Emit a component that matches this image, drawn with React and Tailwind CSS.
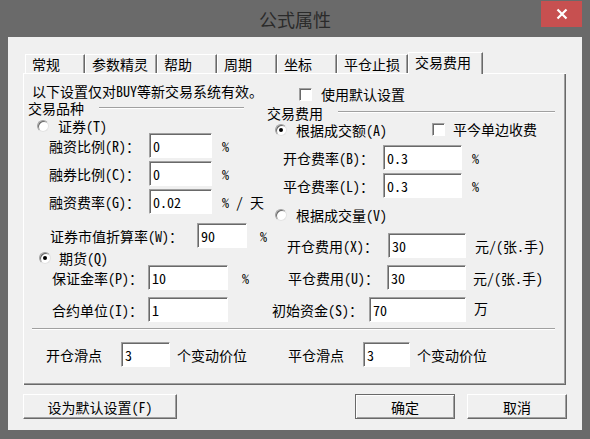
import React from 'react';

const Input = ({ w, v }) => (
  <div className={`${w} h-[25px] shrink-0 bg-white border border-t-[#a0a0a0] border-l-[#a0a0a0] border-r-white border-b-white shadow-[inset_1px_1px_0_#696969] flex items-center pl-[3px] leading-[16px]`}>
    {v}
  </div>
);

const Radio = ({ on }) => (
  <div className="w-[12px] h-[12px] shrink-0 rounded-full bg-white border border-t-[#a0a0a0] border-l-[#a0a0a0] border-r-[#e3e3e3] border-b-[#e3e3e3] shadow-[inset_1px_1px_0_#696969] flex items-center justify-center">
    {on && <div className="w-[4px] h-[4px] rounded-full bg-black" />}
  </div>
);

const Check = () => (
  <div className="w-[13px] h-[13px] shrink-0 bg-white border border-t-[#a0a0a0] border-l-[#a0a0a0] border-r-white border-b-white shadow-[inset_1px_1px_0_#696969]" />
);

const Etched = ({ w }) => (
  <div className={`${w} h-[2px] border-t border-t-[#a0a0a0] border-b border-b-white`} />
);

const Tab = ({ w, label, active }) =>
  active ? (
    <div className={`${w} h-[22px] -mb-px relative z-10 bg-[#f0f0f0] border-l border-t border-white border-r border-r-[#696969] shadow-[inset_-1px_0_0_#a0a0a0] pl-[6px] pb-[3px] flex items-center leading-[16px]`}>
      {label}
    </div>
  ) : (
    <div className={`${w} h-[19px] border-l border-t border-white border-r border-r-[#696969] shadow-[inset_-1px_0_0_#a0a0a0] pl-[6px] flex items-center leading-[16px]`}>
      {label}
    </div>
  );

const Btn = ({ w, label, def }) =>
  def ? (
    <div className={`${w} h-[25px] bg-[#f0f0f0] border border-[#696969] shadow-[inset_1px_1px_0_#ffffff,inset_-1px_-1px_0_#a0a0a0] flex items-center justify-center leading-[16px]`}>
      {label}
    </div>
  ) : (
    <div className={`${w} h-[25px] bg-[#f0f0f0] border border-t-white border-l-white border-r-[#696969] border-b-[#696969] shadow-[inset_-1px_-1px_0_#a0a0a0] flex items-center justify-center leading-[16px]`}>
      {label}
    </div>
  );

export default function App() {
  return (
    <div className="w-[590px] h-[439px] bg-[#6a6a6a] flex flex-col overflow-hidden font-[family-name:'Noto_Sans_Mono_CJK_SC','Noto_Sans_CJK_SC',sans-serif]">
      {/* title bar */}
      <div className="h-[37px] grid grid-cols-[1fr_auto_1fr] shrink-0">
        <div />
        <div className="self-center text-[18px] leading-[22px] text-[#2a2a2a] font-['Noto_Sans_CJK_SC',sans-serif]">公式属性</div>
        <div className="flex justify-end items-start">
          <div className="mr-[8px] mt-[1px] w-[41px] h-[26px] bg-[#c75050] flex items-center justify-center">
            <svg width="12" height="12" viewBox="0 0 12 12">
              <path d="M1.5 1.5 L10.5 10.5 M10.5 1.5 L1.5 10.5" stroke="#fff" strokeWidth="2.2" />
            </svg>
          </div>
        </div>
      </div>

      {/* client area */}
      <div className="mx-[8px] h-[393px] bg-[#f0f0f0] pt-[15px] pl-[15px] text-[14px] text-black flex flex-col">
        {/* tabs */}
        <div className="h-[21px] flex items-end ml-[2px]">
          <Tab w="w-[60px]" label="常规" />
          <Tab w="w-[72px]" label="参数精灵" />
          <Tab w="w-[60px]" label="帮助" />
          <Tab w="w-[60px]" label="周期" />
          <Tab w="w-[60px]" label="坐标" />
          <Tab w="w-[71px]" label="平仓止损" />
          <Tab w="w-[75px]" label="交易费用" active />
        </div>

        {/* panel */}
        <div className="w-[543px] h-[312px] shadow-[inset_1px_1px_0_#ffffff,inset_-1px_-1px_0_#696969,inset_-2px_-2px_0_#a0a0a0] flex flex-col">
          <div className="mt-[10px] h-[16px] flex items-start">
            <div className="ml-[9px] w-[267px] leading-[16px] whitespace-nowrap">以下设置仅对BUY等新交易系统有效。</div>
            <div className="mt-[3px] flex items-center">
              <Check />
              <span className="ml-[9px] leading-[16px]">使用默认设置</span>
            </div>
          </div>

          <div className="flex">
            {/* left column */}
            <div className="w-[244px] flex flex-col">
              <div className="mt-[1px] h-[16px] flex items-center">
                <span className="ml-[5px] w-[71px] leading-[16px]">交易品种</span>
                <Etched w="w-[145px]" />
              </div>
              <div className="mt-[2px] h-[16px] flex items-center">
                <div className="ml-[14px]"><Radio /></div>
                <span className="ml-[9px] leading-[16px]">证券(T)</span>
              </div>
              <div className="-mt-px h-[25px] flex items-center">
                <span className="ml-[26px] w-[100px] leading-[16px]">融资比例(R)：</span>
                <Input w="w-[63px]" v="0" />
                <span className="ml-[10px] leading-[16px]">%</span>
              </div>
              <div className="mt-[3px] h-[25px] flex items-center">
                <span className="ml-[26px] w-[100px] leading-[16px]">融券比例(C)：</span>
                <Input w="w-[63px]" v="0" />
                <span className="ml-[10px] leading-[16px]">%</span>
              </div>
              <div className="mt-[3px] h-[25px] flex items-center">
                <span className="ml-[26px] w-[100px] leading-[16px]">融资费率(G)：</span>
                <Input w="w-[63px]" v="0.02" />
                <span className="ml-[10px] leading-[16px] whitespace-pre">% / 天</span>
              </div>
              <div className="mt-[9px] h-[25px] flex items-center">
                <span className="ml-[27px] w-[148px] leading-[16px] whitespace-nowrap">证券市值折算率(W)：</span>
                <Input w="w-[50px]" v="90" />
                <span className="ml-[13px] leading-[16px]">%</span>
              </div>
              <div className="mt-[2px] h-[16px] flex items-center">
                <div className="ml-[16px]"><Radio on /></div>
                <span className="ml-[8px] leading-[16px]">期货(Q)</span>
              </div>
              <div className="-mt-px h-[25px] flex items-center">
                <span className="ml-[29px] w-[96px] leading-[16px]">保证金率(P)：</span>
                <Input w="w-[80px]" v="10" />
                <span className="ml-[14px] leading-[16px]">%</span>
              </div>
              <div className="mt-[7px] h-[25px] flex items-center">
                <span className="ml-[29px] w-[96px] leading-[16px]">合约单位(I)：</span>
                <Input w="w-[80px]" v="1" />
              </div>
            </div>

            {/* right column */}
            <div className="flex-1 flex flex-col">
              <div className="mt-[6px] h-[16px] flex items-start">
                <span className="w-[71px] leading-[16px]">交易费用</span>
                <div className="mt-[6px]"><Etched w="w-[217px]" /></div>
              </div>
              <div className="mt-[1px] h-[16px] flex items-center">
                <div className="ml-[8px] w-[157px] flex items-center">
                  <Radio on />
                  <span className="ml-[9px] leading-[16px]">根据成交额(A)</span>
                </div>
                <div className="-mt-[2px] flex items-center">
                  <Check />
                  <span className="ml-[8px] leading-[16px]">平今单边收费</span>
                </div>
              </div>
              <div className="mt-[7px] h-[25px] flex items-center">
                <span className="ml-[16px] w-[100px] leading-[16px]">开仓费率(B)：</span>
                <Input w="w-[79px]" v="0.3" />
                <span className="ml-[10px] leading-[16px]">%</span>
              </div>
              <div className="mt-[3px] h-[25px] flex items-center">
                <span className="ml-[16px] w-[100px] leading-[16px]">平仓费率(L)：</span>
                <Input w="w-[79px]" v="0.3" />
                <span className="ml-[10px] leading-[16px]">%</span>
              </div>
              <div className="mt-[9px] h-[16px] flex items-center">
                <div className="ml-[8px]"><Radio /></div>
                <span className="ml-[9px] leading-[16px]">根据成交量(V)</span>
              </div>
              <div className="mt-[10px] h-[25px] flex items-center">
                <span className="ml-[20px] w-[101px] leading-[16px]">开仓费用(X)：</span>
                <Input w="w-[78px]" v="30" />
                <span className="ml-[9px] leading-[16px] whitespace-nowrap">元/(张.手)</span>
              </div>
              <div className="mt-[7px] h-[25px] flex items-center">
                <span className="ml-[21px] w-[99px] leading-[16px]">平仓费用(U)：</span>
                <Input w="w-[79px]" v="30" />
                <span className="ml-[7px] leading-[16px] whitespace-nowrap">元/(张.手)</span>
              </div>
              <div className="mt-[7px] h-[25px] flex items-center">
                <span className="ml-[5px] w-[97px] leading-[16px]">初始资金(S)：</span>
                <Input w="w-[97px]" v="70" />
                <span className="ml-[8px] -mt-[4px] leading-[16px]">万</span>
              </div>
            </div>
          </div>

          <div className="mt-[6px] ml-[9px]"><Etched w="w-[523px]" /></div>

          <div className="mt-[12px] h-[25px] flex items-center">
            <div className="ml-[23px] w-[242px] flex items-center">
              <span className="w-[75px] leading-[16px]">开仓滑点</span>
              <Input w="w-[49px]" v="3" />
              <span className="ml-[7px] leading-[16px]">个变动价位</span>
            </div>
            <div className="flex items-center">
              <span className="w-[75px] leading-[16px]">平仓滑点</span>
              <Input w="w-[47px]" v="3" />
              <span className="ml-[7px] leading-[16px]">个变动价位</span>
            </div>
          </div>
        </div>

        {/* buttons */}
        <div className="mt-[9px] flex">
          <Btn w="w-[154px]" label="设为默认设置(F)" />
          <div className="ml-[178px]"><Btn w="w-[100px]" label="确定" def /></div>
          <div className="ml-[12px]"><Btn w="w-[100px]" label="取消" /></div>
        </div>
      </div>
    </div>
  );
}
